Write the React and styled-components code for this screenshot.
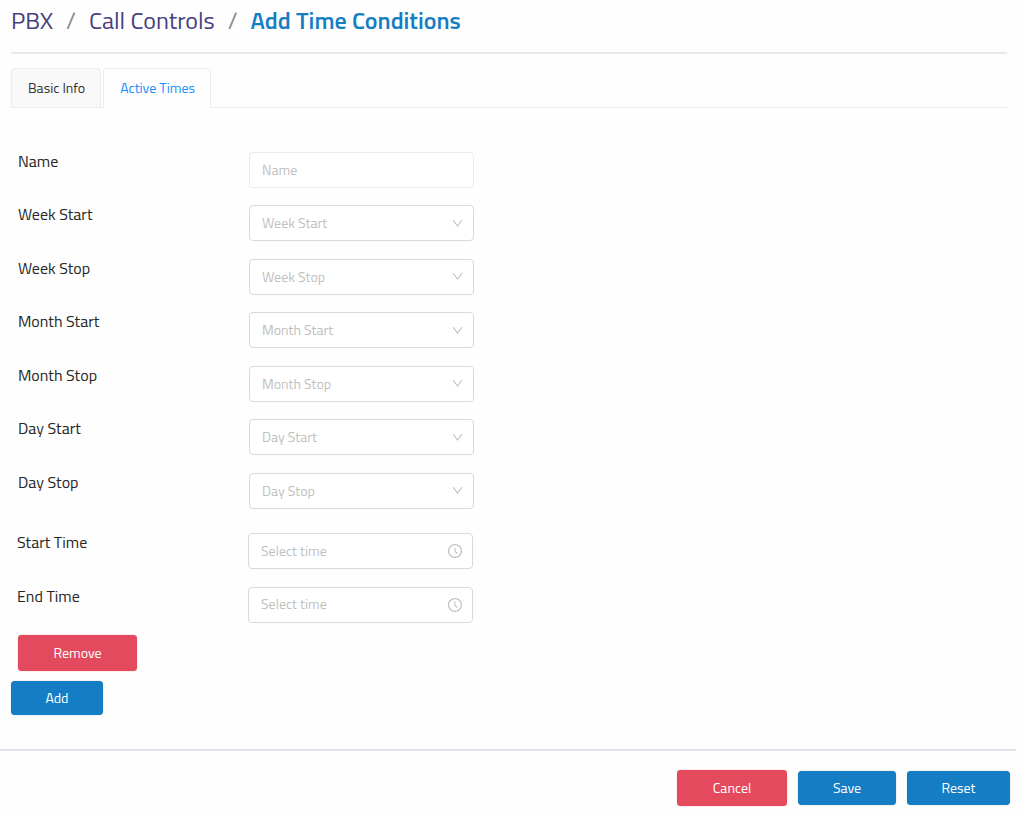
import React from "react"
import styled, { createGlobalStyle } from "styled-components"
import { AiOutlineClockCircle, AiOutlineDown } from "react-icons/ai"

const selects = [
  {
    id: "week-start",
    label: "Week Start",
    options: ["Monday", "Tuesday", "Wednesday", "Thursday", "Friday"],
  },
  {
    id: "week-stop",
    label: "Week Stop",
    options: ["Monday", "Tuesday", "Wednesday", "Thursday", "Friday"],
  },
  {
    id: "month-start",
    label: "Month Start",
    options: ["January", "February", "March", "April", "May", "June"],
  },
  {
    id: "month-stop",
    label: "Month Stop",
    options: ["January", "February", "March", "April", "May", "June"],
  },
  { id: "day-start", label: "Day Start", options: ["1", "2", "3", "4", "5"] },
  { id: "day-stop", label: "Day Stop", options: ["1", "2", "3", "4", "5"] },
]

const times = [
  { id: "start-time", label: "Start Time" },
  { id: "end-time", label: "End Time" },
]

const SelectField = ({ id, label, options }) => (
  <Row>
    <Label htmlFor={id}>{label}</Label>
    <Control>
      <Select id={id} defaultValue="">
        <option value="" disabled hidden>
          {label}
        </option>
        {options.map((option) => (
          <option key={option}>{option}</option>
        ))}
      </Select>
      <ControlIcon>
        <AiOutlineDown size={13} />
      </ControlIcon>
    </Control>
  </Row>
)

const TimeField = ({ id, label }) => (
  <Row>
    <Label htmlFor={id}>{label}</Label>
    <Control>
      <Input id={id} type="text" placeholder="Select time" />
      <ControlIcon>
        <AiOutlineClockCircle size={16} />
      </ControlIcon>
    </Control>
  </Row>
)

const App = () => {
  return (
    <>
      <GlobalStyle />
      <Content>
        <Breadcrumb aria-label="Breadcrumb">
          <Crumb href="#pbx">PBX</Crumb>
          <Separator>/</Separator>
          <Crumb href="#call-controls">Call Controls</Crumb>
          <Separator>/</Separator>
          <Current>Add Time Conditions</Current>
        </Breadcrumb>
        <Tabs role="tablist">
          <Tab type="button" role="tab" aria-selected="false">
            Basic Info
          </Tab>
          <Tab type="button" role="tab" aria-selected="true" $active>
            Active Times
          </Tab>
        </Tabs>
        <form>
          <Fields $height={374}>
            <Row>
              <Label htmlFor="name">Name</Label>
              <Control>
                <Input id="name" type="text" placeholder="Name" $light />
              </Control>
            </Row>
            {selects.map((field) => (
              <SelectField key={field.id} {...field} />
            ))}
          </Fields>
          <TimeFields $height={107}>
            {times.map((field) => (
              <TimeField key={field.id} {...field} />
            ))}
          </TimeFields>
          <Actions>
            <RemoveButton type="button" $width={119} $danger>
              Remove
            </RemoveButton>
            <Button type="button" $width={92}>
              Add
            </Button>
          </Actions>
        </form>
      </Content>
      <Footer>
        <Button type="button" $width={110} $danger>
          Cancel
        </Button>
        <Button type="button" $width={98}>
          Save
        </Button>
        <Button type="button" $width={103}>
          Reset
        </Button>
      </Footer>
    </>
  )
}

export default App

const GlobalStyle = createGlobalStyle`
  * {
    box-sizing: border-box;
  }
  body {
    margin: 0;
    background: #fefefe;
    color: #262626;
    font-family: "Titillium Web", Roboto, "Liberation Sans", sans-serif;
    font-size: 14px;
  }
  button, input, select {
    font: inherit;
  }
`
const Content = styled.main`
  padding: 0 17px 34px 11px;
`
const Breadcrumb = styled.nav`
  display: flex;
  align-items: center;
  gap: 13px;
  height: 54px;
  padding-bottom: 12px;
  border-bottom: 2px solid #e7e8ed;
  font-size: 24px;
  line-height: 28px;
  white-space: nowrap;
`
const Crumb = styled.a`
  color: #45417d;
  text-decoration: none;
`
const Separator = styled.span`
  color: #8c8c8c;
`
const Current = styled.span`
  color: #147dc4;
  font-weight: 600;
`
const Tabs = styled.div`
  display: flex;
  gap: 2px;
  margin-top: 14px;
  border-bottom: 1px solid #ececec;
`
const Tab = styled.button`
  height: 40px;
  margin-bottom: -1px;
  padding: 0 15px 2px 16px;
  border: 1px solid #ececec;
  border-bottom-color: ${({ $active }) => ($active ? "#fefefe" : "#ececec")};
  border-radius: 4px 4px 0 0;
  background: ${({ $active }) => ($active ? "#fefefe" : "#f9f9f9")};
  color: ${({ $active }) => ($active ? "#1890ff" : "#333")};
  cursor: pointer;
`
const Fields = styled.div`
  display: grid;
  grid-auto-rows: 1fr;
  min-height: ${({ $height }) => $height}px;
  margin-top: 44px;
  padding-left: 7px;
`
const TimeFields = styled(Fields)`
  margin-top: 7px;
  padding-left: 6px;
`
const Row = styled.div`
  display: grid;
  grid-template-columns: 231px 225px;
  align-items: start;
`
const Label = styled.label`
  font-size: 16px;
  line-height: 18px;
`
const Control = styled.div`
  position: relative;
`
const Input = styled.input`
  display: block;
  width: 100%;
  height: 36px;
  padding: 0 12px 2px;
  border: 1px solid ${({ $light }) => ($light ? "#e6ebeb" : "#d9d9d9")};
  border-radius: 4px;
  background: #fff;
  color: #262626;
  &::placeholder {
    color: #bfbfbf;
  }
`
const Select = styled.select`
  display: block;
  width: 100%;
  height: 36px;
  padding: 0 12px 1px;
  border: 1px solid #d9d9d9;
  border-radius: 4px;
  appearance: none;
  background: #fff;
  color: #bfbfbf;
`
const ControlIcon = styled.span`
  position: absolute;
  top: 0;
  right: 10px;
  display: flex;
  align-items: center;
  height: 36px;
  color: #bfbfbf;
  pointer-events: none;
`
const Actions = styled.div`
  display: flex;
  flex-direction: column;
  align-items: flex-start;
  gap: 10px;
`
const Button = styled.button`
  width: ${({ $width }) => $width}px;
  height: ${({ $danger }) => ($danger ? 36 : 34)}px;
  padding: 0 0 2px;
  border: 0;
  border-radius: 4px;
  background: ${({ $danger }) => ($danger ? "#e44a5e" : "#147dc4")};
  box-shadow: 0 0 1px ${({ $danger }) => ($danger ? "#e44a5e" : "#7d8a94")};
  color: #fff;
  cursor: pointer;
`
const RemoveButton = styled(Button)`
  margin: -5px 0 0 7px;
`
const Footer = styled.footer`
  display: flex;
  justify-content: flex-end;
  align-items: center;
  gap: 11px;
  margin-right: 8px;
  padding: 19px 6px 9px 0;
  border-top: 2px solid #e2e3ea;
`
